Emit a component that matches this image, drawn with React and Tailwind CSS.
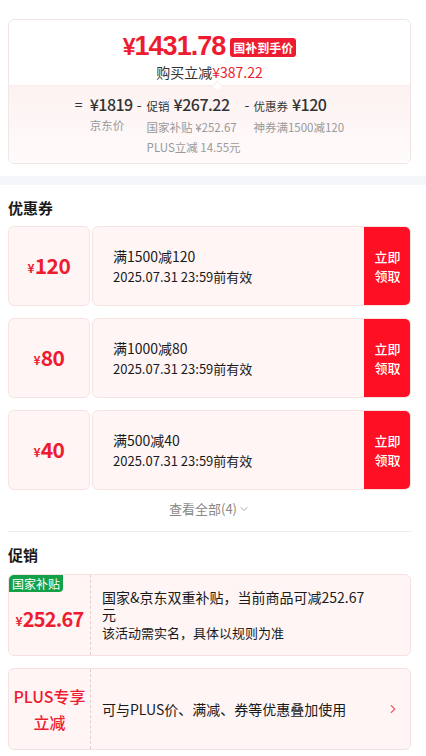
import { ChevronDown, ChevronRight } from "lucide-react";

const coupons = [
  { amount: "120", title: "满1500减120" },
  { amount: "80", title: "满1000减80" },
  { amount: "40", title: "满500减40" },
];

// ── 优惠券卡片 ────────────────────────────────────
function Coupon({ amount, title }) {
  return (
    <div className="relative flex h-20">
      <div className="flex w-[82px] items-center justify-center rounded-md border border-[#f7e3e3] bg-[#fff5f5] text-[#ee1c30]">
        <span className="mt-[3px] text-[12px] font-bold">¥</span>
        <span className="text-[21px] font-bold tracking-[-0.5px]">{amount}</span>
      </div>
      <div className="ml-[2px] flex flex-1 overflow-hidden rounded-md border border-[#f7e3e3] bg-[#fff5f5]">
        <div className="flex flex-1 flex-col justify-center pl-5 text-[#1a1a1a]">
          <p className="text-[14px] leading-[20px]">{title}</p>
          <p className="mt-[2px] text-[13px] leading-[18px]">2025.07.31 23:59前有效</p>
        </div>
        <div className="-my-px -mr-px flex w-[47px] items-center justify-center bg-[#ff0f23] text-center text-[13px] font-medium leading-[19px] text-white">
          立即
          <br />
          领取
        </div>
      </div>
      <span className="absolute left-[80px] top-[-3px] h-[6px] w-[6px] rounded-full bg-white" />
      <span className="absolute bottom-[-3px] left-[80px] h-[6px] w-[6px] rounded-full bg-white" />
    </div>
  );
}

export default function App() {
  return (
    <div className="w-[426px] bg-white font-['Noto_Sans_CJK_SC','Noto_Sans',sans-serif]">
      {/* 到手价 */}
      <div className="pl-2 pr-[15px] pt-[19px]">
        <div className="overflow-hidden rounded-md border border-[#f1e6e6]">
          <div className="flex flex-col items-center pb-[4px] pt-[10px]">
            <div className="flex items-center">
              <span className="font-['Liberation_Sans',Arial,sans-serif] text-[27px] font-bold leading-[32px] tracking-[-1px] text-[#ee1c30]">
                <span className="text-[23px]">¥</span>1431.78
              </span>
              <span className="ml-[5px] mt-[2px] rounded-[3px] bg-[#ee1c30] px-[3px] text-[12px] font-bold leading-[19px] text-white">
                国补到手价
              </span>
            </div>
            <p className="text-[14px] leading-[18px] text-[#333]">
              购买立减<span className="text-[#ee1c30]">¥387.22</span>
            </p>
          </div>
          <div className="relative border-t border-[#fbecec] bg-gradient-to-b from-[#fdf2f2] to-[#fffbfb] pb-[7px] pt-[6px]">
            <span className="absolute left-[205px] top-[-4px] h-[7px] w-[7px] rotate-45 border-l border-t border-[#fbecec] bg-white" />
            <div className="flex justify-center text-[#333]">
              <div className="flex">
                <span className="mr-[7px] text-[14px] leading-[24px]">=</span>
                <div className="flex flex-col">
                  <span className="text-[16px] font-medium leading-[24px] tracking-[-0.5px]">¥1819</span>
                  <span className="text-[11.5px] leading-[18px] text-[#999]">京东价</span>
                </div>
              </div>
              <div className="ml-[4px] flex">
                <span className="mr-[5px] text-[14px] leading-[24px]">-</span>
                <div className="flex flex-col">
                  <span className="leading-[24px]">
                    <span className="text-[11.5px]">促销</span>
                    <span className="ml-1 text-[16px] font-medium tracking-[-0.5px]">¥267.22</span>
                  </span>
                  <span className="text-[11.5px] leading-[18px] text-[#999]">国家补贴 ¥252.67</span>
                  <span className="mt-[2px] text-[11.5px] leading-[18px] text-[#999]">PLUS立减 14.55元</span>
                </div>
              </div>
              <div className="ml-[4px] flex">
                <span className="mr-[4px] text-[14px] leading-[24px]">-</span>
                <div className="flex flex-col">
                  <span className="leading-[24px]">
                    <span className="text-[11.5px]">优惠券</span>
                    <span className="ml-1 text-[16px] font-medium tracking-[-0.5px]">¥120</span>
                  </span>
                  <span className="text-[11.5px] leading-[18px] text-[#999]">神券满1500减120</span>
                </div>
              </div>
            </div>
          </div>
        </div>
      </div>

      <div className="mt-[12px] h-[9px] bg-[#f5f6fa]" />

      {/* 优惠券 */}
      <div className="pl-2 pr-[15px]">
        <h3 className="mt-[13px] text-[15px] font-bold leading-[20px] text-[#1a1a1a]">优惠券</h3>
        <div className="mt-[8px] flex flex-col gap-3">
          {coupons.map((c) => (
            <Coupon key={c.amount} amount={c.amount} title={c.title} />
          ))}
        </div>
        <div className="flex items-center justify-center pt-[9px] pb-[12px] text-[13px] leading-[20px] text-[#888]">
          查看全部(4)
          <ChevronDown size={12} strokeWidth={1.5} className="ml-[1px]" />
        </div>
        <div className="h-px bg-[#eeeeee]" />

        {/* 促销 */}
        <h3 className="mt-[13px] text-[15px] font-bold leading-[20px] text-[#1a1a1a]">促销</h3>
        <div className="mt-[9px] flex flex-col gap-3 pb-2">
          <div className="relative flex h-[82px] overflow-hidden rounded-md border border-[#f5e1e1] bg-[#fff5f5]">
            <span className="absolute left-0 top-0 rounded-br-[4px] bg-[#12a149] px-[3px] text-[12px] leading-[17px] text-white">
              国家补贴
            </span>
            <div className="flex w-[82px] shrink-0 items-center justify-center border-r border-dashed border-[#e6cccc] pt-[8px] text-[#ee1c30]">
              <span className="mt-[4px] text-[12px] font-bold">¥</span>
              <span className="text-[20px] font-bold tracking-[-0.8px]">252.67</span>
            </div>
            <div className="flex flex-1 flex-col justify-center pl-[11px] pr-10 text-[#1a1a1a]">
              <p className="text-[14px] leading-[17px]">国家&amp;京东双重补贴，当前商品可减252.67元</p>
              <p className="mt-px text-[13px] leading-[17px]">该活动需实名，具体以规则为准</p>
            </div>
          </div>
          <div className="flex h-[82px] overflow-hidden rounded-md border border-[#f5e1e1] bg-[#fff5f5]">
            <div className="flex w-[82px] shrink-0 items-center justify-center border-r border-dashed border-[#e6cccc] text-center text-[16px] font-medium leading-[26px] text-[#ee1c30]">
              PLUS专享
              <br />
              立减
            </div>
            <div className="flex flex-1 items-center pl-[11px] text-[14px] text-[#1a1a1a]">
              可与PLUS价、满减、券等优惠叠加使用
            </div>
            <div className="flex items-center pr-[10px] text-[#f05a6a]">
              <ChevronRight size={14} strokeWidth={2} />
            </div>
          </div>
        </div>
      </div>
    </div>
  );
}
